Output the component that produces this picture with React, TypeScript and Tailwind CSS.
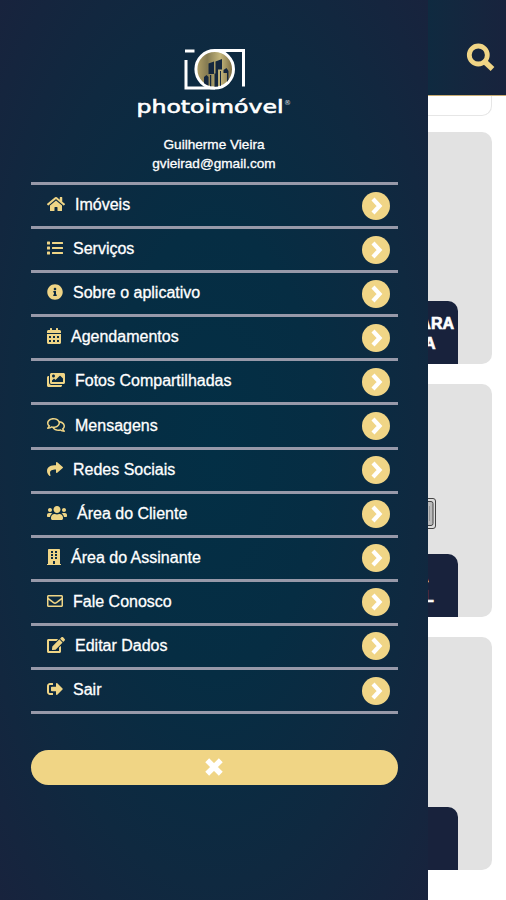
import type { ReactNode } from "react";
import type { IconType } from "react-icons";
import {
  FaBuilding,
  FaCalendarAlt,
  FaEdit,
  FaHome,
  FaImages,
  FaInfoCircle,
  FaList,
  FaRegComments,
  FaRegEnvelope,
  FaShare,
  FaSignOutAlt,
  FaUsers,
} from "react-icons/fa";

const items: { label: string; Icon: IconType; width: string }[] = [
  { label: "Imóveis", Icon: FaHome, width: "w-[18px]" },
  { label: "Serviços", Icon: FaList, width: "w-[16px]" },
  { label: "Sobre o aplicativo", Icon: FaInfoCircle, width: "w-[16px]" },
  { label: "Agendamentos", Icon: FaCalendarAlt, width: "w-[14px]" },
  { label: "Fotos Compartilhadas", Icon: FaImages, width: "w-[18px]" },
  { label: "Mensagens", Icon: FaRegComments, width: "w-[18px]" },
  { label: "Redes Sociais", Icon: FaShare, width: "w-[16px]" },
  { label: "Área do Cliente", Icon: FaUsers, width: "w-[20px]" },
  { label: "Área do Assinante", Icon: FaBuilding, width: "w-[14px]" },
  { label: "Fale Conosco", Icon: FaRegEnvelope, width: "w-[16px]" },
  { label: "Editar Dados", Icon: FaEdit, width: "w-[18px]" },
  { label: "Sair", Icon: FaSignOutAlt, width: "w-[16px]" },
];

function Logo() {
  return (
    <svg width="160" height="76" viewBox="0 0 160 76" className="mx-auto mt-[44px] block">
      <defs>
        <linearGradient id="lens" x1="0" x2="1">
          <stop offset="0" stopColor="#b5a368" />
          <stop offset="0.3" stopColor="#857b52" />
          <stop offset="0.65" stopColor="#c4b67c" />
          <stop offset="1" stopColor="#75653d" />
        </linearGradient>
        <clipPath id="lensClip">
          <circle cx="80.700" cy="25.300" r="17.500" />
        </clipPath>
      </defs>
      <g fill="none" stroke="#fff" strokeWidth="3">
        <path d="M51 7h9.500" />
        <path d="M52 16v28h29" />
        <path d="M80 6.500h29.500v36" />
        <circle cx="80.700" cy="25.300" r="18.800" fill="url(#lens)" />
      </g>
      <g clipPath="url(#lensClip)" fill="#14263e">
        <path d="M74.500 19.500l5.500-2v12.500h-5.500z" />
        <path d="M81.500 17.500l6.500-2.500v10.500h-4v18h-3.500v-14h1z" />
        <path d="M70 33l2.500-2 2 2v10h-4.500z" />
        <path d="M76 31h1.200v14h-1.200zM86 27h1v16h-1z" />
        <path d="M89.500 26l3-2 2 3v14h-1.500v-12h-3.500z" />
      </g>
      <g fill="#fff" fontFamily="'DejaVu Sans', sans-serif">
        <text x="2.500" y="68.500" fontSize="18" stroke="#fff" strokeWidth="0.600" textLength="147" lengthAdjust="spacingAndGlyphs">
          photoimóvel
        </text>
        <text x="150" y="60.500" fontSize="7" opacity="0.8">®</text>
      </g>
    </svg>
  );
}

function Card({ children }: { children?: ReactNode }) {
  return (
    <div className="mb-[20.300px] flex h-[232.700px] w-[64px] flex-col justify-end overflow-hidden rounded-r-[10px] bg-[#e2e2e2]">
      {children}
    </div>
  );
}

function CardLabel({ children }: { children?: ReactNode }) {
  return (
    <div className="flex h-[63.500px] w-[30px] shrink-0 flex-col overflow-hidden rounded-tr-[10px] bg-[#18223c] pt-[13px] text-[16px] leading-[20.500px] font-bold text-white [-webkit-text-stroke:0.7px_white]">
      {children}
    </div>
  );
}

export default function App() {
  return (
    <div className="flex h-[900px] w-[506px] overflow-hidden bg-white font-['Liberation_Sans',Arial,sans-serif]">
      <aside className="h-full w-[428px] shrink-0 bg-[radial-gradient(ellipse_farthest-corner_at_50%_50%,#032f45_0%,#062d43_35%,#0f2940_68%,#18233d_100%)] px-[30.500px] text-white">
        <Logo />
        <div className="mt-[14.500px] text-center text-[13.600px] leading-[19.500px] [-webkit-text-stroke:0.3px_white]">
          <p>Guilherme Vieira</p>
          <p>gvieirad@gmail.com</p>
        </div>
        <ul className="mt-[8.500px] border-t-3 border-[#9799a9]">
          {items.map(({ label, Icon, width }) => (
            <li key={label} className="flex h-[44.100px] items-center border-b-3 border-[#9799a9] pr-[7.500px] pl-[16px]">
              <Icon className={`${width} mb-[3px] h-4 shrink-0 text-[#efd586]`} />
              <span className="mb-[1px] ml-[10.500px] text-[16px] leading-5 whitespace-nowrap [-webkit-text-stroke:0.3px_white]">
                {label}
              </span>
              <span className="ml-auto flex size-7 items-center justify-center rounded-full bg-[#f0d586]">
                <svg width="28" height="28" viewBox="0 0 28 28" fill="none" stroke="#fff" strokeWidth="4.200">
                  <path d="M11 7l6.500 7-6.500 7" />
                </svg>
              </span>
            </li>
          ))}
        </ul>
        <button className="mt-[35.500px] flex h-[35px] w-full items-center justify-center rounded-full bg-[#f0d585]">
          <svg width="20" height="20" viewBox="0 0 20 20" fill="none" stroke="#fff" strokeWidth="5.500">
            <path d="M3.200 3.200l13.600 13.600M16.800 3.200l-13.600 13.600" />
          </svg>
        </button>
      </aside>
      <div className="flex h-full w-[78px] flex-col">
        <header className="flex h-[95px] shrink-0 items-start bg-linear-to-r from-[#0f2a40] to-[#18233d] pt-[43px] pl-[38px]">
          <svg width="30" height="30" viewBox="0 0 30 30" fill="none" stroke="#f0d586">
            <circle cx="12.300" cy="12" r="9" strokeWidth="4.800" />
            <path d="M18.500 18.500l8 7.500" strokeWidth="5.500" />
          </svg>
        </header>
        <div className="h-px shrink-0 bg-[#c9ac72]" />
        <div className="mb-[15.500px] h-[20px] w-[64px] shrink-0 rounded-br-[10px] border-r border-b border-[#e6e6e6]" />
        <Card>
          <CardLabel>
            <span className="self-end pr-[4px]">PARA</span>
            <span className="-ml-[4px]">A</span>
          </CardLabel>
        </Card>
        <Card>
          <svg width="9" height="33" viewBox="0 0 9 33" className="mb-[23.500px] shrink-0" fill="none" stroke="#444">
            <path d="M-2 1.500h7q2.500 0 2.500 2.500v25q0 2.500-2.500 2.500h-7" fill="#ddd" />
            <path d="M-2 4.500h5q2 0 2 2v20q0 2-2 2h-5" fill="#bbb" />
            <path d="M1.500 9v15" stroke="#999" />
          </svg>
          <CardLabel>
            <span className="-ml-[11px]">A</span>
            <span className="-ml-[4px]">L</span>
          </CardLabel>
        </Card>
        <Card>
          <CardLabel />
        </Card>
      </div>
    </div>
  );
}
